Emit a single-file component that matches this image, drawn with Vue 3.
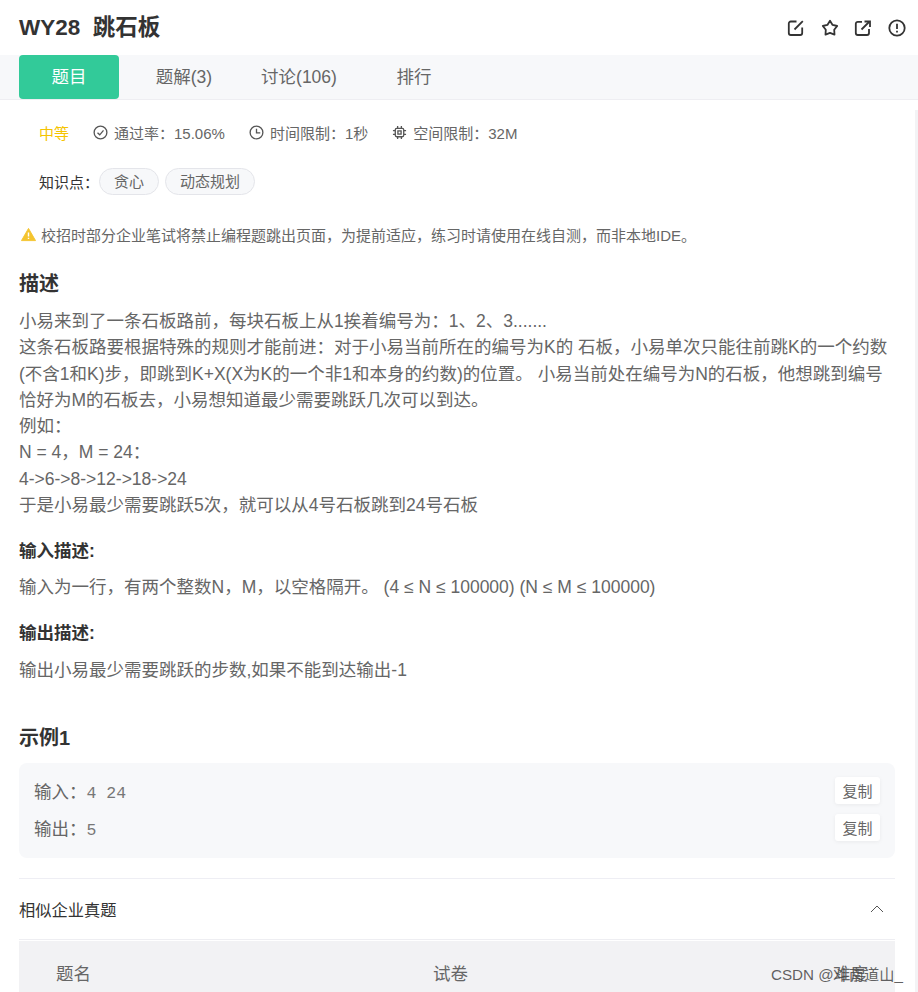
<template>
  <div class="page">
    <header class="head">
      <h1 class="title">WY28&nbsp;&nbsp;跳石板</h1>
      <div class="head-icons">
        <svg viewBox="0 0 18 18" class="hicon"><path d="M9.500 2.500H3.800A2 2 0 0 0 1.800 4.500V14A2 2 0 0 0 3.800 16H13.200A2 2 0 0 0 15.200 14V8.500" /><path d="M7.500 10.500 15.800 2.200" /></svg>
        <svg viewBox="0 0 18 18" class="hicon"><path d="M9 1.800 11.600 5.900 16.200 7 13.200 10.800 13.500 15.600 9 13.800 4.500 15.600 4.800 10.800 1.800 7 6.400 5.900Z" stroke-linejoin="round" /></svg>
        <svg viewBox="0 0 18 18" class="hicon"><path d="M8 2.800H3.800A2 2 0 0 0 1.800 4.800V14A2 2 0 0 0 3.800 16H13A2 2 0 0 0 15 14V10" /><path d="M7.500 10.500 15 3" /><path d="M10.500 2.500H16V8" /></svg>
        <svg viewBox="0 0 18 18" class="hicon"><circle cx="9" cy="9" r="7.700" /><path d="M9 4.800V10" /><path d="M9 11.800V13.400" /></svg>
      </div>
    </header>

    <nav class="tabs">
      <a v-for="tab in tabs" :key="tab.label" class="tab" :class="{ active: tab.active }">{{ tab.label }}</a>
    </nav>

    <div class="scrollbar"></div>

    <section class="meta">
      <span class="level">中等</span>
      <span class="meta-item">
        <svg viewBox="0 0 16 16" class="micon"><circle cx="8" cy="8" r="6.800" /><path d="M4.800 8.200 7.200 10.500 11.200 5.800" /></svg>通过率：15.06%
      </span>
      <span class="meta-item">
        <svg viewBox="0 0 16 16" class="micon"><circle cx="8" cy="8" r="6.800" /><path d="M8 4V8.300H12" /></svg>时间限制：1秒
      </span>
      <span class="meta-item">
        <svg viewBox="0 0 16 16" class="micon"><rect x="3.500" y="3.500" width="9" height="9" rx="1.500" /><rect x="6.300" y="6.300" width="3.400" height="3.400" /><path d="M6 1V3.500M10 1V3.500M6 12.500V15M10 12.500V15M1 6H3.500M1 10H3.500M12.500 6H15M12.500 10H15" /></svg>空间限制：32M
      </span>
    </section>

    <section class="knowledge">
      <span class="k-label">知识点：</span>
      <span v-for="tag in tags" :key="tag" class="tag">{{ tag }}</span>
    </section>

    <p class="notice">
      <svg viewBox="0 0 16 16" class="warn"><path d="M8 1.500 15.500 14.500H.5Z" fill="#f4c42f" stroke="#f4c42f" stroke-linejoin="round" /><path d="M8 5.800V10.200M8 11.400V12.800" stroke="#fff" stroke-width="1.500" /></svg>
      校招时部分企业笔试将禁止编程题跳出页面，为提前适应，练习时请使用在线自测，而非本地IDE。
    </p>

    <h2 class="sec-title first">描述</h2>
    <div class="body-text desc">
      <div v-for="line in descLines" :key="line">{{ line }}</div>
    </div>

    <h3 class="sub-title in-title">输入描述:</h3>
    <p class="body-text in-text">输入为一行，有两个整数N，M，以空格隔开。 (4 ≤ N ≤ 100000) (N ≤ M ≤ 100000)</p>

    <h3 class="sub-title out-title">输出描述:</h3>
    <p class="body-text out-text">输出小易最少需要跳跃的步数,如果不能到达输出-1</p>

    <h2 class="sec-title example">示例1</h2>
    <div class="sample">
      <div class="sample-row">
        <span>输入：<span class="mono">4 24</span></span>
        <button class="copy">复制</button>
      </div>
      <div class="sample-row">
        <span>输出：<span class="mono">5</span></span>
        <button class="copy">复制</button>
      </div>
    </div>

    <div class="similar">
      <span>相似企业真题</span>
      <svg viewBox="0 0 14 8" class="chevron"><path d="M1 7 7 1 13 7" /></svg>
    </div>

    <div class="table-head">
      <span>题名</span>
      <span>试卷</span>
      <span>难度</span>
    </div>

    <div class="watermark">CSDN @斗南道山_</div>
  </div>
</template>

<script setup>
  const tabs = [
    { label: "题目", active: true },
    { label: "题解(3)" },
    { label: "讨论(106)" },
    { label: "排行" },
  ];

  const tags = ["贪心", "动态规划"];

  const descLines = [
    "小易来到了一条石板路前，每块石板上从1挨着编号为：1、2、3.......",
    "这条石板路要根据特殊的规则才能前进：对于小易当前所在的编号为K的 石板，小易单次只能往前跳K的一个约数",
    "(不含1和K)步，即跳到K+X(X为K的一个非1和本身的约数)的位置。 小易当前处在编号为N的石板，他想跳到编号",
    "恰好为M的石板去，小易想知道最少需要跳跃几次可以到达。",
    "例如：",
    "N = 4，M = 24：",
    "4->6->8->12->18->24",
    "于是小易最少需要跳跃5次，就可以从4号石板跳到24号石板",
  ];
</script>

<style>
  html,
  body {
    margin: 0;
    background: #fff;
  }
</style>

<style scoped>
  .page {
    position: relative;
    width: 918px;
    height: 992px;
    overflow: hidden;
    background: #fff;
    color: #333;
    font-family: "Liberation Sans", "Noto Sans CJK SC", sans-serif;
  }

  .head {
    display: flex;
    align-items: center;
    justify-content: space-between;
    height: 55px;
    padding: 0 12px 0 19px;
    box-sizing: border-box;
  }

  .title {
    margin: 0;
    font-size: 22.5px;
    font-weight: 700;
    line-height: 55px;
    color: #333;
  }

  .head-icons {
    display: flex;
    gap: 15.7px;
  }

  .hicon {
    width: 18px;
    height: 18px;
    fill: none;
    stroke: #333;
    stroke-width: 1.8;
  }

  .tabs {
    display: flex;
    height: 45px;
    padding-left: 19px;
    background: #f7f8fa;
    border-bottom: 1px solid #eeeef2;
    box-sizing: border-box;
  }

  .tab {
    width: 100px;
    margin-right: 15px;
    height: 44px;
    border-radius: 4px;
    font-size: 17.5px;
    line-height: 44px;
    text-align: center;
    color: #666;
  }

  .tab.active {
    background: #32ca99;
    color: #fff;
  }

  .scrollbar {
    position: absolute;
    right: 0;
    top: 110px;
    bottom: 0;
    width: 3px;
    background: #f3f3f5;
  }

  .meta {
    display: flex;
    align-items: center;
    height: 20px;
    margin-top: 22px;
    padding-left: 39px;
    font-size: 15px;
    color: #666;
  }

  .level {
    color: #f5c400;
    margin-right: 24px;
  }

  .meta-item {
    display: flex;
    align-items: center;
    gap: 6px;
    margin-right: 24px;
  }

  .micon {
    width: 15px;
    height: 15px;
    fill: none;
    stroke: #555;
    stroke-width: 1.4;
  }

  .knowledge {
    display: flex;
    align-items: center;
    margin-top: 26px;
    padding-left: 39px;
    height: 27px;
    font-size: 15px;
    color: #333;
  }

  .tag {
    height: 27px;
    padding: 0 14px;
    margin-right: 6px;
    border: 1px solid #e4e5ea;
    border-radius: 14px;
    background: #f7f8fa;
    line-height: 25px;
    color: #666;
    box-sizing: border-box;
  }

  .notice {
    display: flex;
    align-items: center;
    gap: 5px;
    margin: 29px 0 0;
    padding-left: 21px;
    height: 20px;
    font-size: 15px;
    color: #666;
  }

  .warn {
    width: 15px;
    height: 15px;
  }

  .sec-title {
    margin: 0;
    padding-left: 19px;
    font-size: 20px;
    font-weight: 700;
    line-height: 28px;
    color: #333;
  }

  .first {
    margin-top: 26px;
  }

  .body-text {
    margin: 0;
    padding: 0 19px;
    font-size: 17.5px;
    line-height: 26.25px;
    color: #666;
  }

  .desc {
    margin-top: 10px;
  }

  .in-text {
    margin-top: 10px;
  }

  .out-text {
    margin-top: 11px;
  }

  .sub-title {
    margin: 0;
    padding-left: 19px;
    font-size: 17.5px;
    font-weight: 700;
    line-height: 26px;
    color: #333;
  }

  .in-title {
    margin-top: 20px;
  }

  .out-title {
    margin-top: 20px;
  }

  .example {
    margin-top: 40px;
  }

  .sample {
    margin: 11px 23px 0 19px;
    height: 95px;
    padding: 14px 15px 0;
    box-sizing: border-box;
    border-radius: 8px;
    background: #f7f8fa;
  }

  .sample-row {
    display: flex;
    align-items: center;
    justify-content: space-between;
    height: 27px;
    margin-bottom: 10px;
    font-size: 17.5px;
    color: #666;
  }

  .mono {
    font-family: "Liberation Mono", monospace;
    font-size: 16.5px;
    color: #777;
  }

  .copy {
    width: 45px;
    height: 27px;
    padding: 0;
    border: 0;
    border-radius: 3px;
    background: #fff;
    box-shadow: 0 1px 4px rgba(0, 0, 0, 0.06);
    font: inherit;
    font-size: 15px;
    color: #666;
  }

  .similar {
    display: flex;
    align-items: center;
    justify-content: space-between;
    margin: 20px 23px 0 19px;
    height: 62px;
    box-sizing: border-box;
    border-top: 1px solid #eeeef4;
    border-bottom: 1px solid #eeeef2;
    font-size: 16.25px;
    color: #333;
  }

  .chevron {
    width: 14px;
    height: 8px;
    margin-right: 11px;
    fill: none;
    stroke: #555;
    stroke-width: 1;
  }

  .table-head {
    display: grid;
    grid-template-columns: 377px 400px 1fr;
    align-items: center;
    height: 64px;
    margin: 1px 23px 0 19px;
    padding-left: 37px;
    background: #f2f2f4;
    font-size: 17.5px;
    color: #666;
  }

  .watermark {
    position: absolute;
    left: 771px;
    top: 965px;
    font-size: 15.2px;
    line-height: 20px;
    color: rgba(70, 70, 70, 0.85);
  }
</style>
